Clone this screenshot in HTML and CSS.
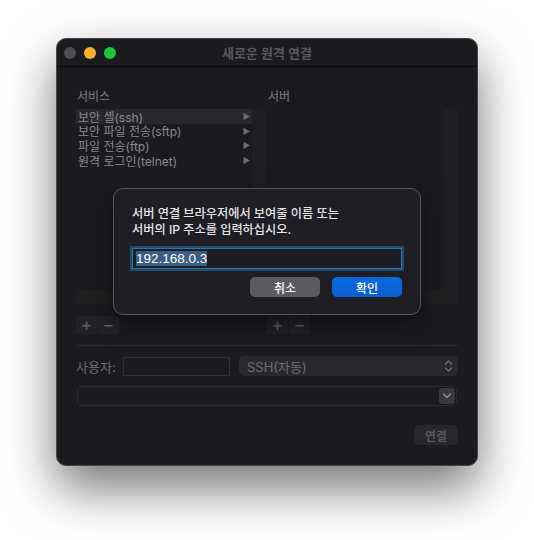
FILE: index.html
```html
<!DOCTYPE html>
<html lang="ko">
<head>
    <meta charset="UTF-8">
    <meta name="viewport" content="width=device-width, initial-scale=1.0">
    <title>새로운 원격 연결</title>
    <link rel="stylesheet" href="styles.css">
</head>
<body>
    <div class="window">
        <div class="titlebar">
            <div class="lights">
                <span class="light gray"></span>
                <span class="light yellow"></span>
                <span class="light green"></span>
            </div>
            <div class="title">새로운 원격 연결</div>
        </div>

        <div class="content">
            <div class="columns">
                <div class="col">
                    <div class="col-label">서비스</div>
                    <div class="list">
                        <div class="list-body">
                            <ul class="items">
                                <li class="item selected"><span>보안 셸(ssh)</span><span class="arrow">▶</span></li>
                                <li class="item"><span>보안 파일 전송(sftp)</span><span class="arrow">▶</span></li>
                                <li class="item"><span>파일 전송(ftp)</span><span class="arrow">▶</span></li>
                                <li class="item"><span>원격 로그인(telnet)</span><span class="arrow">▶</span></li>
                            </ul>
                            <div class="vtrack"></div>
                        </div>
                        <div class="htrack"></div>
                    </div>
                    <div class="pm">
                        <span class="pm-btn">+</span>
                        <span class="pm-btn">−</span>
                    </div>
                </div>
                <div class="col">
                    <div class="col-label">서버</div>
                    <div class="list">
                        <div class="list-body">
                            <ul class="items"></ul>
                            <div class="vtrack"></div>
                        </div>
                        <div class="htrack"></div>
                    </div>
                    <div class="pm">
                        <span class="pm-btn">+</span>
                        <span class="pm-btn">−</span>
                    </div>
                </div>
            </div>

            <div class="sep"></div>

            <div class="user-row">
                <span class="user-label">사용자:</span>
                <div class="field"></div>
                <div class="select">
                    <span>SSH(자동)</span>
                    <svg class="updown" width="9" height="14" viewBox="0 0 9 14">
                        <path d="M1.5 5 L4.5 2 L7.5 5 M1.5 9 L4.5 12 L7.5 9" fill="none" stroke="#6f6e73" stroke-width="1.3" stroke-linecap="round" stroke-linejoin="round"/>
                    </svg>
                </div>
            </div>

            <div class="combo">
                <span class="combo-btn">
                    <svg width="10" height="6" viewBox="0 0 10 6">
                        <path d="M1.5 1 L5 4.5 L8.5 1" fill="none" stroke="#8e8d92" stroke-width="1.4" stroke-linecap="round" stroke-linejoin="round"/>
                    </svg>
                </span>
            </div>

            <div class="actions">
                <button class="btn-connect">연결</button>
            </div>
        </div>

        <div class="sheet">
            <p class="sheet-text">서버 연결 브라우저에서 보여줄 이름 또는<br>서버의 IP 주소를 입력하십시오.</p>
            <div class="ip"><span class="ip-sel">192.168.0.3</span></div>
            <div class="sheet-buttons">
                <button class="sbtn cancel">취소</button>
                <button class="sbtn ok">확인</button>
            </div>
        </div>
    </div>
</body>
</html>
```

FILE: styles.css
```css
html {
    background-color: #ffffff;
}
body {
    margin: 0;
    box-sizing: border-box;
    min-height: 100vh;
    padding-top: 38px;
    overflow: hidden;
    font-family: "Inter", "Noto Sans CJK KR", sans-serif;
}
.window {
    position: relative;
    box-sizing: border-box;
    width: 422px;
    height: 428px;
    margin: 0 auto;
    background-color: #1b1a1f;
    border: 1px solid #46454a;
    border-radius: 10px;
    box-shadow: 0 22px 50px rgba(0, 0, 0, 0.55);
}
.titlebar {
    position: relative;
    height: 27px;
    border-bottom: 1px solid #0c0c0e;
    display: flex;
    align-items: center;
}
.lights {
    display: flex;
    gap: 8px;
    padding-left: 7px;
}
.light {
    width: 12px;
    height: 12px;
    border-radius: 50%;
}
.gray { background-color: #4d4c51; }
.yellow { background-color: #fdb02d; }
.green { background-color: #1ec53b; }
.title {
    position: absolute;
    left: 0;
    right: 0;
    text-align: center;
    font-size: 13px;
    font-weight: bold;
    color: #59585d;
}
.content {
    padding: 20px 19px 0;
}
.columns {
    display: grid;
    grid-template-columns: 190px 191px;
    gap: 1px;
}
.col-label {
    font-size: 12px;
    color: #7e7d82;
    height: 22px;
    padding-left: 1px;
}
.list {
    height: 195px;
    display: flex;
    flex-direction: column;
}
.list-body {
    flex: 1;
    display: flex;
}
.items {
    flex: 1;
    margin: 0;
    padding: 0;
    list-style: none;
}
.vtrack {
    width: 14px;
    background-color: #1f1f22;
}
.htrack {
    height: 14px;
    background-color: #1f1f22;
}
.item {
    display: flex;
    justify-content: space-between;
    align-items: center;
    height: 14.6px;
    padding: 0 2px 0 2px;
    font-size: 12px;
    color: #8a898e;
}
.item.selected {
    background-color: #28272c;
}
.arrow {
    font-size: 8px;
    color: #6c6b70;
}
.pm {
    display: flex;
    gap: 1px;
    margin-top: 12px;
}
.pm-btn {
    width: 21px;
    height: 18px;
    background-color: #222125;
    color: #5f5e63;
    font-size: 18px;
    line-height: 17px;
    text-align: center;
}
.sep {
    height: 1px;
    background-color: #2c2b30;
    margin-top: 11px;
}
.user-row {
    display: flex;
    align-items: center;
    margin-top: 10px;
    height: 20px;
}
.user-label {
    font-size: 13px;
    color: #6d6c71;
    width: 47px;
}
.field {
    box-sizing: border-box;
    width: 107px;
    height: 19px;
    border: 1px solid #303034;
    background-color: #1b1a1f;
}
.select {
    box-sizing: border-box;
    margin-left: 9px;
    flex: 1;
    height: 20px;
    border-radius: 5px;
    background-color: #29282d;
    display: flex;
    align-items: center;
    justify-content: space-between;
    padding: 0 5px 0 8px;
    font-size: 13px;
    color: #6e6d72;
}
.combo {
    box-sizing: border-box;
    height: 20px;
    margin: 10px 1px 0;
    border: 1px solid #2c2b30;
    border-radius: 5px;
    display: flex;
    justify-content: flex-end;
    align-items: center;
    padding-right: 1px;
}
.combo-btn {
    width: 16px;
    height: 16px;
    border-radius: 4px;
    background-color: #38373c;
    display: flex;
    align-items: center;
    justify-content: center;
}
.actions {
    display: flex;
    justify-content: flex-end;
    margin-top: 19px;
}
.btn-connect {
    width: 44px;
    height: 20px;
    border: none;
    border-radius: 5px;
    background-color: #28272b;
    color: #59585d;
    font-family: inherit;
    font-size: 12px;
    font-weight: bold;
    padding: 0;
}
.sheet {
    position: absolute;
    left: 56px;
    top: 149px;
    box-sizing: border-box;
    width: 308px;
    height: 127px;
    padding: 17px 18px 0 18px;
    background-color: #1f1e25;
    border: 1px solid #55545a;
    border-radius: 10px;
    box-shadow: 0 8px 24px rgba(0, 0, 0, 0.5);
}
.sheet-text {
    margin: 0;
    font-size: 12.2px;
    font-weight: 500;
    line-height: 16px;
    color: #e4e4e6;
}
.ip {
    box-sizing: border-box;
    margin-top: 10px;
    height: 21px;
    border: 1px solid #2f73ad;
    box-shadow: 0 0 0 2px #1b4a72;
    background-color: #1d1c21;
    padding: 2px 3px;
    font-family: "Liberation Sans", sans-serif;
    font-size: 13.5px;
    line-height: 15px;
}
.ip-sel {
    background-color: #3b5d82;
    color: #ffffff;
}
.sheet-buttons {
    display: flex;
    justify-content: flex-end;
    gap: 12px;
    margin-top: 8px;
}
.sbtn {
    width: 70px;
    height: 20px;
    border: none;
    border-radius: 5px;
    font-family: inherit;
    font-size: 12px;
    font-weight: 500;
    color: #ffffff;
    padding: 0;
}
.cancel {
    background-color: #5b5a5f;
}
.ok {
    background: linear-gradient(#0c69dd, #0a5ecf);
}
```
